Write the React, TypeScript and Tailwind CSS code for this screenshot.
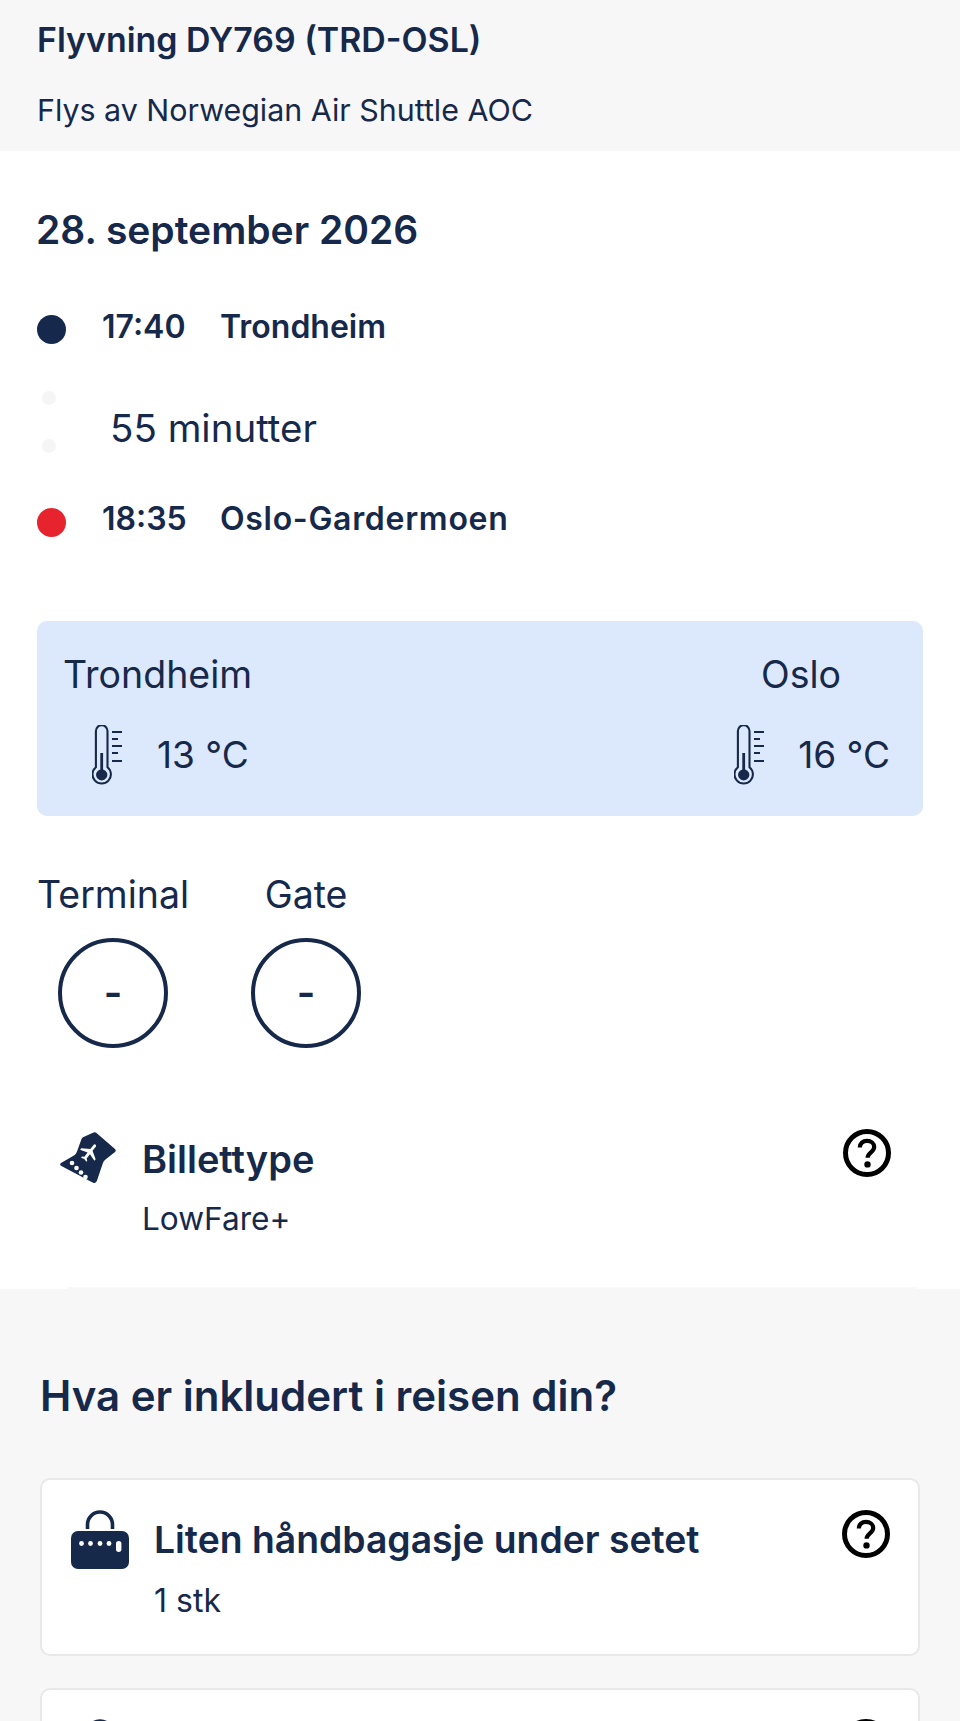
const ink = "text-[#17294a]";

function Thermometer() {
  return (
    <svg width="30" height="60" viewBox="0 0 30 60" fill="none" className="shrink-0 text-[#17294a]">
      <path d="M3.9 42.2V6a5.8 5.8 0 0 1 11.6 0v36.2a9.2 9.2 0 1 1-11.6 0Z" stroke="currentColor" strokeWidth="2.1" />
      <path d="M8.3 28h2.8v16.4a5.6 5.6 0 1 1-2.8 0Z" fill="currentColor" />
      <path d="M20 7h10M20 14h6M20 21h10M20 28h6M20 36h10" stroke="currentColor" strokeWidth="2" />
    </svg>
  );
}

function Help() {
  return (
    <svg width="48" height="48" viewBox="0 0 48 48" fill="none" className="shrink-0">
      <circle cx="24" cy="24" r="21.5" stroke="#000" strokeWidth="5" />
      <path d="M16.8 18.6c0-4.2 3.2-6.8 7.2-6.8s7.2 2.5 7.2 6.2c0 5.2-6.6 5.4-6.6 10.8" stroke="#000" strokeWidth="4.2" />
      <circle cx="24.5" cy="35.4" r="3.2" fill="#000" />
    </svg>
  );
}

function Ticket() {
  return (
    <svg width="56" height="54" viewBox="0 0 56 54" className="shrink-0">
      <path d="M33 1.8c1-.8 2.2-.8 3.2 0L55 18c1 .9 1 2.1 0 2.9L45.5 28.500c-1.600 1.300-2.300 2.700-2.900 4.500L37 49.500c-.7 2-1.900 3-3.800 2.300-1.200-.4-2-1-3-1.500L1.400 35c-1.500-.8-1.700-2-.4-3l12.500-7.200c1.800-1.100 2.800-2.400 3.500-4.300L21.500 8c.4-1 1-1.700 2-2.100Z" fill="#17294a" />
      <g transform="translate(18.5 10) rotate(38 11.5 11.5) scale(.96)">
        <path d="M21 16v-2l-8-5V3.500c0-.83-.67-1.500-1.500-1.500S10 2.670 10 3.500V9l-8 5v2l8-2.500V19l-2 1.500V22l3.500-1 3.500 1v-1.500L13 19v-5.500l8 2.500z" fill="#fff" />
      </g>
      <g fill="#fff">
        <circle cx="12" cy="32" r="2.300" />
        <circle cx="16.500" cy="37" r="2.300" />
        <circle cx="21" cy="41.500" r="2.300" />
        <circle cx="25.500" cy="46" r="2.300" />
      </g>
    </svg>
  );
}

function Bag() {
  return (
    <svg width="58" height="59" viewBox="0 0 58 59" className="shrink-0">
      <path d="M16.500 19v-4.500a12.500 12.500 0 0 1 25 0V19" fill="none" stroke="#17294a" strokeWidth="3.600" />
      <rect x="0" y="21" width="58" height="38" rx="7" fill="#17294a" />
      <g fill="#fff">
        <circle cx="10.500" cy="33.500" r="2.400" />
        <circle cx="19.500" cy="33.500" r="2.400" />
        <circle cx="29" cy="33.500" r="2.400" />
        <circle cx="38" cy="33.500" r="2.400" />
        <rect x="45" y="31" width="5.400" height="11" rx="2.700" />
      </g>
    </svg>
  );
}

function CircleValue({ label }: { label: string }) {
  return (
    <div className="flex flex-col items-center">
      <div className="text-[37.5px] leading-[44px]">{label}</div>
      <div className="mt-[21px] flex h-[110px] w-[110px] items-center justify-center rounded-full border-[4.5px] border-[#17294a] text-[40px] font-semibold">
        -
      </div>
    </div>
  );
}

export default function App() {
  return (
    <div className={`h-[1721px] overflow-hidden bg-white font-['Inter',sans-serif] ${ink}`}>
      <header className="h-[151px] bg-[#f7f7f8] px-[37px] pt-[20px]">
        <h1 className="text-[33.9px] font-semibold leading-[40px]">Flyvning DY769 (TRD-OSL)</h1>
        <p className="mt-[32px] text-[30.4px] leading-[36px]">Flys av Norwegian Air Shuttle AOC</p>
      </header>

      <section className="px-[37px] pt-[56px]">
        <h2 className="-ml-[1px] text-[39px] font-semibold leading-[46px]">28. september 2026</h2>

        <div className="mt-[54px] flex h-[40px] items-start text-[32px] font-semibold leading-[40px]">
          <span className="mr-[36px] mt-[8px] h-[29px] w-[29px] rounded-full bg-[#16294d]" />
          <span className="w-[118px]">17:40</span>
          <span>Trondheim</span>
        </div>

        <div className="flex h-[152px] items-start">
          <div className="ml-[5px] flex flex-col gap-[34px] pt-[44px]">
            <span className="h-[14px] w-[14px] rounded-full bg-[#f5f5f5]" />
            <span className="h-[14px] w-[14px] rounded-full bg-[#f5f5f5]" />
          </div>
          <span className="ml-[54px] pt-[59px] text-[38.5px] leading-[44px]">55 minutter</span>
        </div>

        <div className="flex h-[40px] items-start text-[32px] font-semibold leading-[40px]">
          <span className="mr-[36px] mt-[9px] h-[29px] w-[29px] rounded-full bg-[#e7232e]" />
          <span className="w-[118px]">18:35</span>
          <span className="tracking-[0.7px]">Oslo-Gardermoen</span>
        </div>

        <div className="mt-[82px] flex h-[195px] justify-between rounded-[10px] bg-[#dce8fb] pl-[26px] pr-[33px] pt-[32px]">
          <div>
            <div className="text-[37.5px] leading-[44px]">Trondheim</div>
            <div className="ml-[29px] mt-[28px] flex h-[60px] items-center gap-[35px] text-[37px] leading-[44px]">
              <Thermometer />
              <span>13 °C</span>
            </div>
          </div>
          <div className="flex flex-col items-center">
            <div className="mr-[22px] text-[37.5px] leading-[44px]">Oslo</div>
            <div className="mt-[28px] flex h-[60px] items-center gap-[34px] text-[37px] leading-[44px]">
              <Thermometer />
              <span>16 °C</span>
            </div>
          </div>
        </div>

        <div className="mt-[57px] flex gap-[62px]">
          <CircleValue label="Terminal" />
          <CircleValue label="Gate" />
        </div>

        <div className="mb-[50px] mt-[89px] flex items-start pl-[23px] pr-[32px]">
          <div className="-mt-[6px]">
            <Ticket />
          </div>
          <div className="ml-[26px]">
            <div className="text-[38px] font-semibold leading-[44px]">Billettype</div>
            <div className="mt-[20px] text-[31.6px] leading-[36px]">LowFare+</div>
          </div>
          <div className="-mt-[8px] ml-auto">
            <Help />
          </div>
        </div>

        <div className="ml-[30px] mr-[5px] h-[2px] bg-[#f8f8f9]" />
      </section>

      <section className="bg-[#f7f7f8] px-[40px] pt-[83px]">
        <h2 className="text-[42px] font-semibold leading-[48px]">Hva er inkludert i reisen din?</h2>

        <div className="mt-[58px] flex h-[178px] items-start rounded-[10px] border-2 border-[#e9e9e9] bg-white pl-[29px] pr-[28px] pt-[30px]">
          <Bag />
          <div className="ml-[25px] pt-[8px]">
            <div className="text-[37.3px] font-semibold leading-[44px]">Liten håndbagasje under setet</div>
            <div className="mt-[21px] text-[32px] leading-[36px]">1 stk</div>
          </div>
          <div className="ml-auto">
            <Help />
          </div>
        </div>

        <div className="mt-[32px] flex h-[178px] items-start justify-between rounded-[10px] border-2 border-[#e9e9e9] bg-white pl-[29px] pr-[28px] pt-[29px]">
          <Bag />
          <Help />
        </div>
      </section>
    </div>
  );
}
